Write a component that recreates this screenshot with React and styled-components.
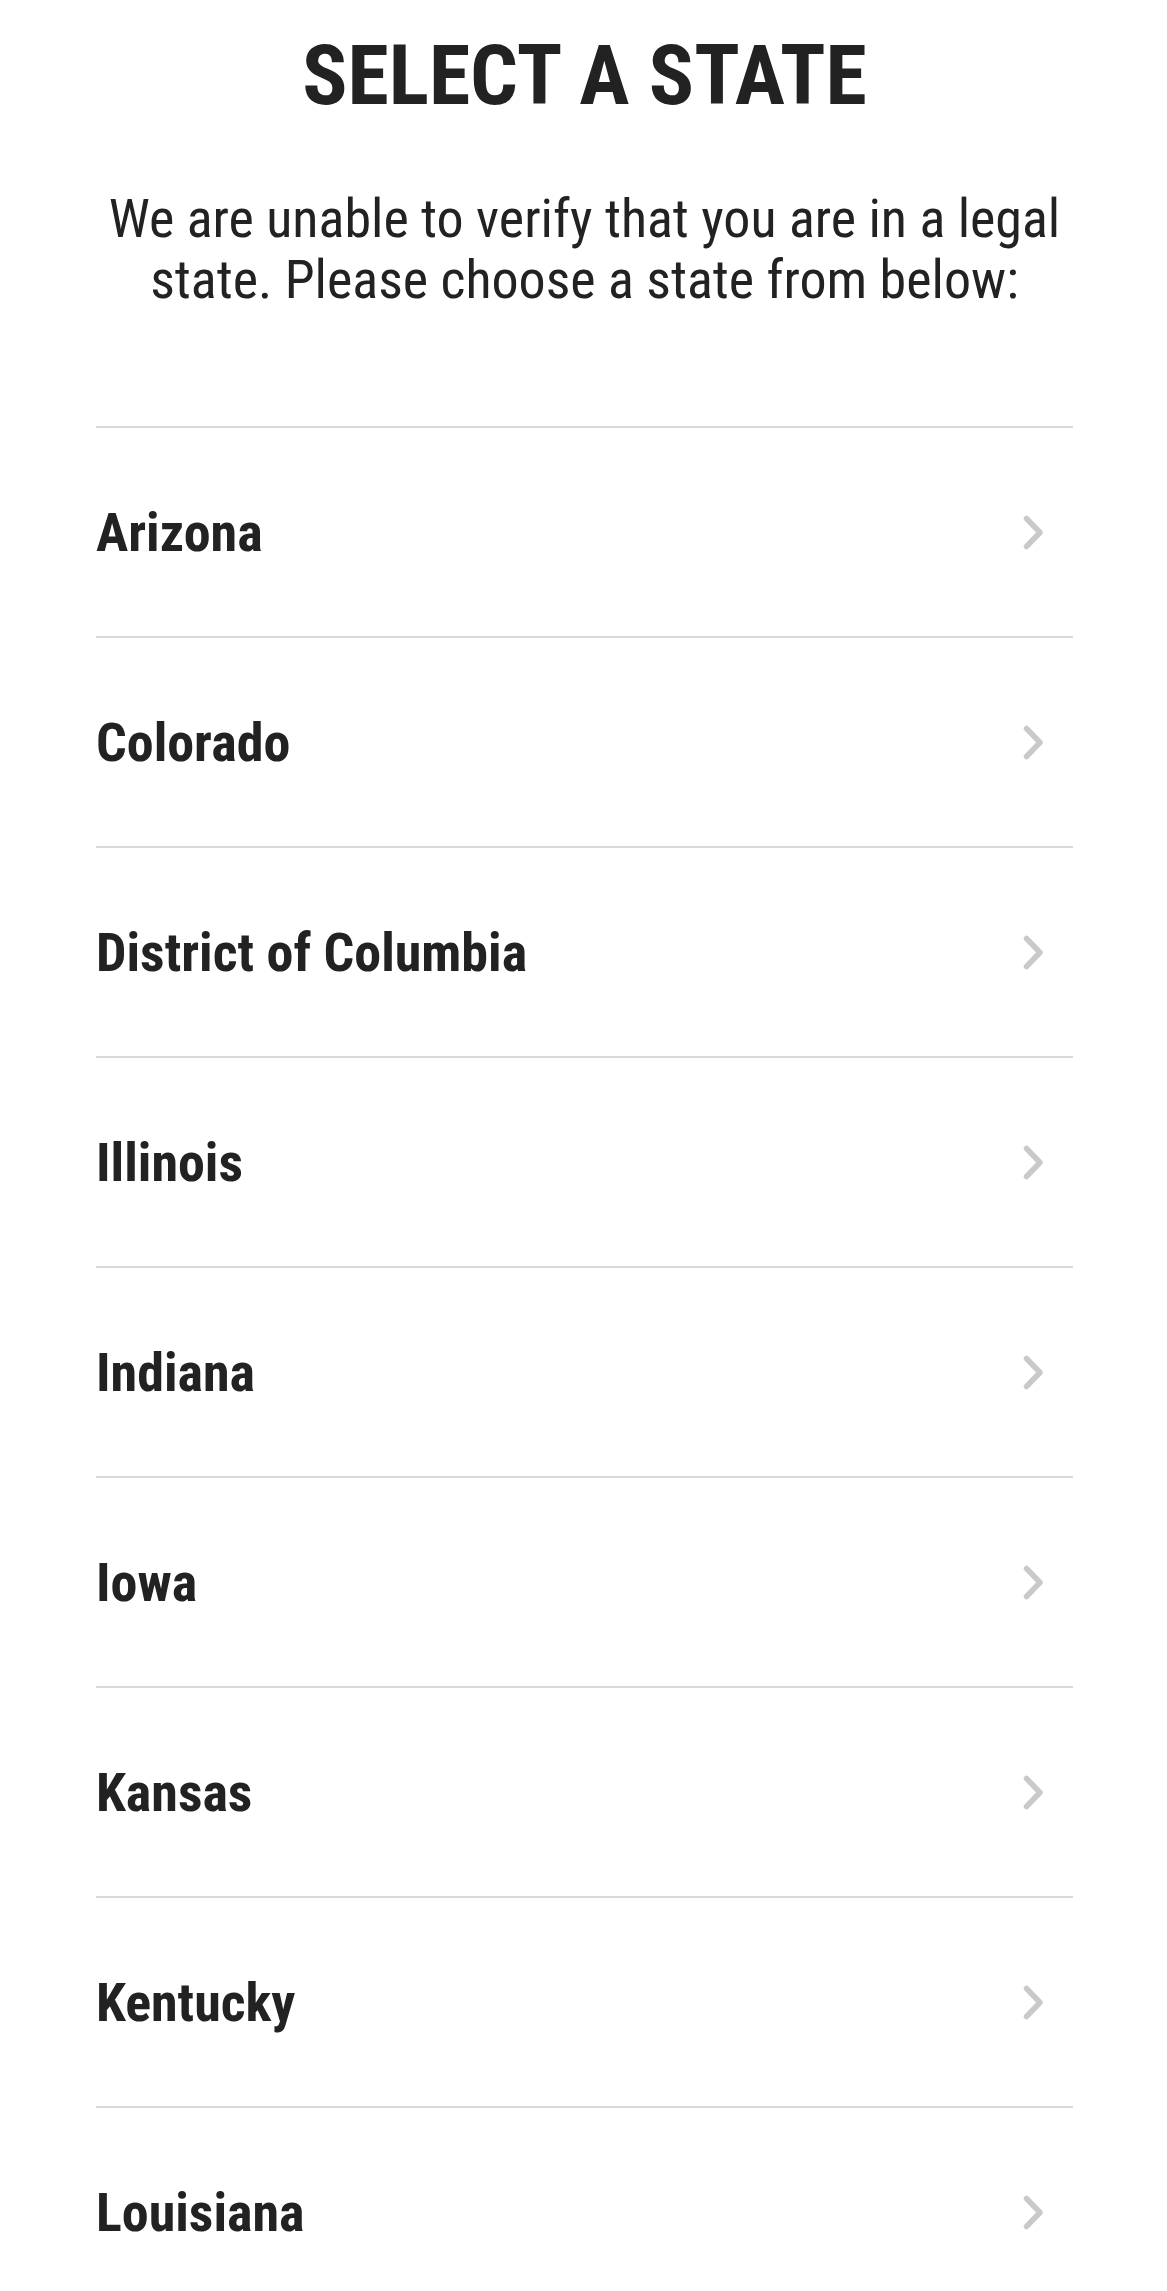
import React from 'react';
import styled, { createGlobalStyle } from 'styled-components';

const Global = createGlobalStyle`
  body {
    margin: 0;
    background: #fff;
    font-family: "Roboto Condensed", Roboto, "Liberation Sans", sans-serif;
    color: #222;
  }
`;

const Page = styled.div`
  padding: 25px 94px 0 96px;
  display: flex;
  flex-direction: column;
`;

const Title = styled.h1`
  margin: 0;
  font-size: 84px;
  line-height: 102px;
  font-weight: 700;
  text-align: center;
  color: #222;
`;

const Intro = styled.p`
  margin: 61px 0 0;
  font-size: 54px;
  line-height: 61px;
  font-weight: 400;
  text-align: center;
  color: #222;
`;

const List = styled.ul`
  list-style: none;
  margin: 116px 0 0;
  padding: 0;
`;

const Row = styled.li`
  box-sizing: border-box;
  height: 210px;
  border-top: 2px solid #d9d9d9;
  display: flex;
  align-items: center;
  justify-content: space-between;
  padding-right: 29px;
  cursor: pointer;
`;

const Name = styled.span`
  font-size: 54px;
  font-weight: 700;
  color: #222;
`;

const Chevron = () => (
  <svg width="21" height="35" viewBox="0 0 21 35" fill="none">
    <path d="M3.5 3.5 L17 17.5 L3.5 31.5" stroke="#c9c9c9" strokeWidth="5.5" strokeLinecap="round" strokeLinejoin="round" />
  </svg>
);

const states = [
  'Arizona',
  'Colorado',
  'District of Columbia',
  'Illinois',
  'Indiana',
  'Iowa',
  'Kansas',
  'Kentucky',
  'Louisiana',
];

export default function App() {
  return (
    <>
      <Global />
      <Page>
        <Title>SELECT A STATE</Title>
        <Intro>
          We are unable to verify that you are in a legal state. Please choose a state from below:
        </Intro>
        <List>
          {states.map(s => (
            <Row key={s}>
              <Name>{s}</Name>
              <Chevron />
            </Row>
          ))}
        </List>
      </Page>
    </>
  );
}
